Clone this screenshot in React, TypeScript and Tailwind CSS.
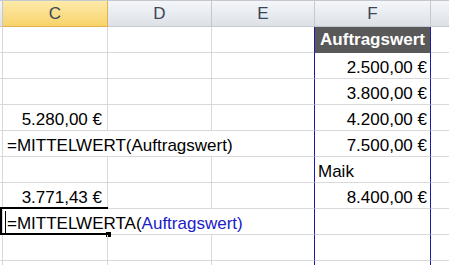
import React from "react"

const font = { fontFamily: "'Liberation Sans', Arial, sans-serif" }

type Row = {
    c?: React.ReactNode
    cAlign?: "left" | "right"
    f?: string
    fAlign?: "left" | "right"
    overflow?: boolean
    active?: boolean
}

const rows: Row[] = [
    {},
    { f: "2.500,00 €" },
    { f: "3.800,00 €" },
    { c: "5.280,00 €", f: "4.200,00 €" },
    { c: "=MITTELWERT(Auftragswert)", cAlign: "left", overflow: true, f: "7.500,00 €" },
    { f: "Maik", fAlign: "left" },
    { c: "3.771,43 €", f: "8.400,00 €" },
    {
        c: (
            <>
                =MITTELWERTA(<span className="text-[#2020c8]">Auftragswert)</span>
            </>
        ),
        cAlign: "left",
        overflow: true,
        active: true,
    },
    {},
    {},
]

function Header() {
    const plain = "border-[#c5c9cf] bg-gradient-to-b from-[#f4f6f9] to-[#dde1e6]"
    return (
        <div className="flex h-[27px] border-t border-[#c5c9cf] text-[17px] text-[#3b4656]">
            <div className={`w-[3px] border-r border-b ${plain}`} />
            <div className="flex w-[105px] items-center justify-center border-r border-b border-[#e2b14c] bg-gradient-to-b from-[#fdeaa9] to-[#f7d36a]">C</div>
            <div className={`flex w-[104px] items-center justify-center border-r border-b ${plain}`}>D</div>
            <div className={`flex w-[103px] items-center justify-center border-r border-b ${plain}`}>E</div>
            <div className={`flex w-[116px] items-center justify-center border-r border-b ${plain}`}>F</div>
            <div className={`flex-1 border-b ${plain}`} />
        </div>
    )
}

function SheetRow({ row, index }: { row: Row; index: number }) {
    const grid = "border-[#d9d9d9]"
    const isHead = index === 0
    return (
        <div className="flex h-[26px] text-[17px] leading-none text-black">
            <div className={`w-[3px] border-r border-b ${grid}`} />
            <div
                className={`relative flex w-[105px] items-end pb-[2px] whitespace-nowrap border-b ${grid} ${
                    row.overflow ? "" : "border-r"
                } ${row.cAlign === "left" ? "justify-start pl-[4px]" : "justify-end pr-[5px]"}`}
            >
                {row.active && (
                    <>
                        <div className="absolute left-[-3px] top-[-2px] h-[28px] w-[108px] border-[2px] border-r-0 border-black" />
                        <div className="absolute left-[2px] top-[2px] h-[22px] w-px bg-black" />
                        <div className="absolute right-[-3px] bottom-[-3px] h-[5px] w-[5px] bg-black" />
                    </>
                )}
                <span className="relative">{row.c}</span>
            </div>
            <div className={`w-[104px] border-b ${grid} ${row.overflow ? "" : "border-r"}`} />
            <div className={`w-[102px] border-b ${grid}`} />
            {isHead ? (
                <div className="flex w-[117px] items-center justify-center whitespace-nowrap border-x border-x-[#1c1ca8] border-b border-b-[#595959] bg-[#595959] font-bold text-white">
                    Auftragswert
                </div>
            ) : (
                <div
                    className={`flex w-[117px] items-end pb-[2px] whitespace-nowrap border-x border-x-[#1c1ca8] border-b ${grid} ${
                        row.fAlign === "left" ? "justify-start pl-[3px]" : "justify-end pr-[3px]"
                    }`}
                >
                    {row.f}
                </div>
            )}
            <div className={`flex-1 border-b ${grid}`} />
        </div>
    )
}

export default function App() {
    return (
        <div className="h-[265px] w-[449px] overflow-hidden bg-white" style={font}>
            <Header />
            {rows.map((row, i) => (
                <SheetRow key={i} row={row} index={i} />
            ))}
        </div>
    )
}
